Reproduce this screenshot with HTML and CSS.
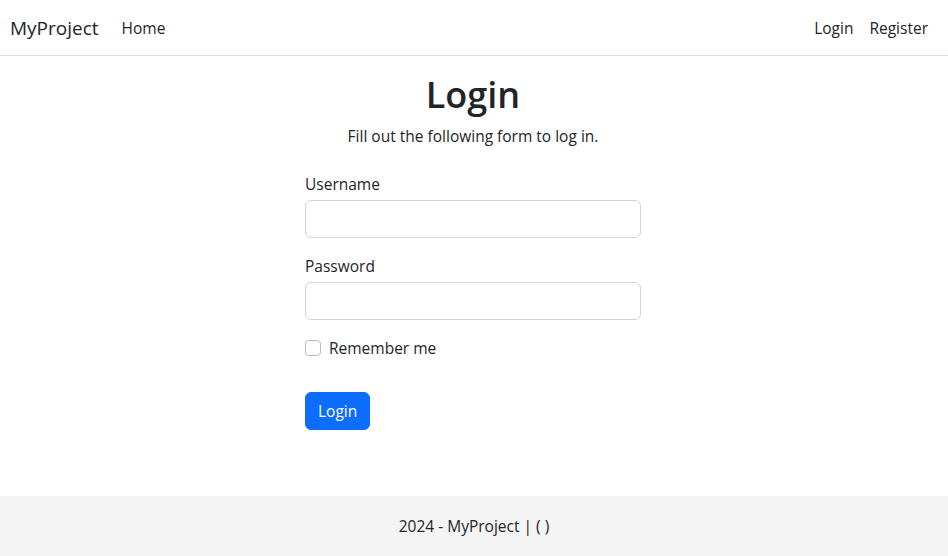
FILE: index.html
```html
<!DOCTYPE html>
<html lang="en">
<head>
<meta charset="utf-8">
<title>Login</title>
<link rel="stylesheet" href="styles.css">
</head>
<body>
<header class="navbar">
  <div class="nav-left">
    <a class="brand" href="#">MyProject</a>
    <a class="nav-link" href="#">Home</a>
  </div>
  <div class="nav-right">
    <a class="nav-link" href="#">Login</a>
    <a class="nav-link" href="#">Register</a>
  </div>
</header>
<main class="main">
  <h1 class="title">Login</h1>
  <p class="lead">Fill out the following form to log in.</p>
  <form class="form">
    <div class="field">
      <label class="label" for="username">Username</label>
      <input class="input" id="username" type="text">
    </div>
    <div class="field">
      <label class="label" for="password">Password</label>
      <input class="input" id="password" type="password">
    </div>
    <div class="check">
      <span class="checkbox"></span>
      <span class="check-label">Remember me</span>
    </div>
    <button class="btn" type="button">Login</button>
  </form>
</main>
<footer class="footer">2024 - MyProject | ( )</footer>
</body>
</html>
```
FILE: styles.css
```css
* { box-sizing: border-box; }
html, body { margin: 0; padding: 0; }
body {
  font-family: "Open Sans", "Noto Sans", sans-serif;
  font-size: 15.5px;
  line-height: 24px;
  color: #212529;
  background: #fff;
  height: 556px;
  display: flex;
  flex-direction: column;
}
a { text-decoration: none; color: #212529; }
.navbar {
  height: 56px;
  border-bottom: 1px solid #dee2e6;
  display: flex;
  align-items: center;
  justify-content: space-between;
  padding: 0 12px 0 10px;
}
.nav-left, .nav-right { display: flex; align-items: center; }
.brand { font-size: 19px; padding: 0 15px 0 0; }
.nav-link { padding: 8px 8px; }
.main {
  display: flex;
  flex-direction: column;
  align-items: center;
  padding-top: 17px;
  padding-right: 2px;
}
.title {
  margin: 0 0 8px;
  font-size: 36px;
  line-height: 43px;
  font-weight: 600;
}
.lead { margin: 0 0 24px; }
.form { width: 336px; }
.field { margin-bottom: 16px; }
.label { display: block; margin-bottom: 4px; }
.input {
  display: block;
  width: 100%;
  height: 38px;
  border: 1px solid #ced4da;
  border-radius: 6px;
  background: #fff;
  font: inherit;
}
.check { display: flex; align-items: center; gap: 8px; height: 24px; }
.checkbox {
  width: 16px; height: 16px;
  border: 1px solid #b9bfc6;
  border-radius: 4px;
  background: #fff;
}
.btn {
  margin-top: 32px;
  height: 38px;
  padding: 0 12px;
  border: 1px solid #0d6efd;
  border-radius: 6px;
  background: #0d6efd;
  color: #fff;
  font: inherit;
}
.footer {
  margin-top: auto;
  height: 60px;
  background: #f4f4f4;
  display: flex;
  align-items: center;
  justify-content: center;
}
```
